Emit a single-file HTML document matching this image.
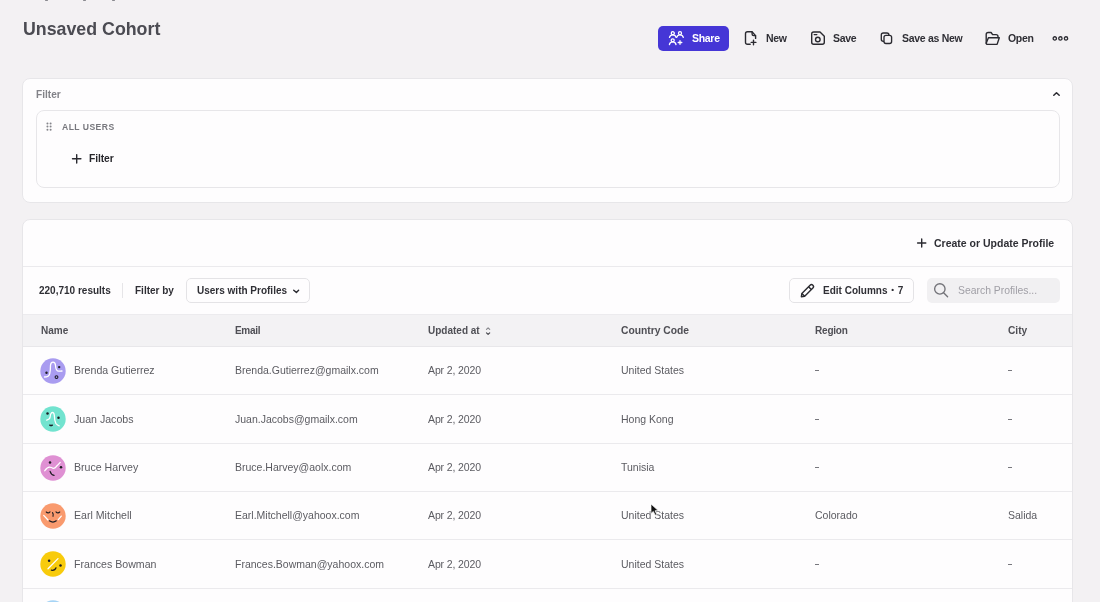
<!DOCTYPE html>
<html><head><meta charset="utf-8">
<style>
*{box-sizing:border-box;margin:0;padding:0}
html,body{width:1100px;height:602px;overflow:hidden}
body{background:#f3f1f3;font-family:"Liberation Sans",sans-serif;position:relative;color:#2b2b30}
.a{position:absolute;white-space:nowrap;will-change:transform}
svg.a{overflow:visible}
.card{background:#fefdfe;border:1px solid #e7e6e9;border-radius:8px}
</style></head><body>
<div class="a" style="left:44.5px;top:0;width:2.5px;height:1.2px;background:#8a8a90;border-radius:1px"></div>
<div class="a" style="left:82.5px;top:0;width:2.5px;height:1.2px;background:#8a8a90;border-radius:1px"></div>
<div class="a" style="left:111.5px;top:0;width:2.5px;height:1.2px;background:#8a8a90;border-radius:1px"></div>
<div class="a" style="left:23px;top:21.73px;font-size:17.8px;line-height:14px;font-weight:bold;color:#4b4b52;">Unsaved Cohort</div>
<div class="a" style="left:658px;top:26px;width:71px;height:25px;background:#4536d6;border-radius:5px"></div>
<svg class="a" style="left:668px;top:30px" width="17" height="16" viewBox="0 0 17 16"><g fill="none" stroke="#fff" stroke-width="1.3" stroke-linecap="round">
<circle cx="4.8" cy="3.2" r="1.5"/><path d="M1.5 7.4 A3.4 3.4 0 0 1 8.1 7.4"/>
<circle cx="12" cy="3.2" r="1.5"/><path d="M8.7 7.4 A3.4 3.4 0 0 1 15.3 7.4"/>
<circle cx="4.7" cy="10.3" r="1.5"/><path d="M1.4 14.5 A3.4 3.4 0 0 1 8 14.5"/>
<path d="M12 10.7 V14.3 M10.2 12.5 H13.8"/></g></svg>
<div class="a" style="left:692px;top:31.26px;font-size:10.5px;line-height:14px;font-weight:bold;color:#ffffff;letter-spacing:-0.3px;">Share</div>
<svg class="a" style="left:744px;top:30px" width="14" height="16" viewBox="0 0 14 16"><g fill="none" stroke="#2a2a30" stroke-width="1.4" stroke-linecap="round" stroke-linejoin="round">
<path d="M6.2 14.3 H3.5 Q1.5 14.3 1.5 12.3 V3.7 Q1.5 1.7 3.5 1.7 H8 L11.6 5.6 V8.4"/>
<path d="M8.1 1.9 V4 Q8.1 5.6 9.7 5.6 H11.5"/>
<path d="M7.2 12.4 H11.9 M9.5 10.1 V14.7"/></g></svg>
<div class="a" style="left:766px;top:31.26px;font-size:10.5px;line-height:14px;font-weight:bold;color:#2f2f35;letter-spacing:-0.3px;">New</div>
<svg class="a" style="left:810px;top:30px" width="16" height="16" viewBox="0 0 16 16"><g fill="none" stroke="#2a2a30" stroke-width="1.4" stroke-linecap="round" stroke-linejoin="round">
<path d="M1.7 4 Q1.7 2 3.7 2 H10 L14.3 6.3 V12.3 Q14.3 14.3 12.3 14.3 H3.7 Q1.7 14.3 1.7 12.3 Z"/>
<path d="M4.2 4.6 H6.8"/><circle cx="7.8" cy="9.5" r="2.3"/></g></svg>
<div class="a" style="left:833px;top:31.26px;font-size:10.5px;line-height:14px;font-weight:bold;color:#2f2f35;letter-spacing:-0.3px;">Save</div>
<svg class="a" style="left:878px;top:30px" width="16" height="16" viewBox="0 0 16 16"><g fill="none" stroke="#2a2a30" stroke-width="1.35" stroke-linejoin="round">
<rect x="3.3" y="3" width="7.6" height="8.3" rx="2"/>
<rect x="6" y="5.3" width="7.6" height="8.2" rx="2" fill="#f3f1f3"/></g></svg>
<div class="a" style="left:902px;top:31.26px;font-size:10.5px;line-height:14px;font-weight:bold;color:#2f2f35;letter-spacing:-0.3px;">Save as New</div>
<svg class="a" style="left:984px;top:30px" width="17" height="16" viewBox="0 0 17 16"><g fill="none" stroke="#2a2a30" stroke-width="1.4" stroke-linecap="round" stroke-linejoin="round">
<path d="M2.2 13.2 V4.5 Q2.2 2.5 4.2 2.5 H7.1 L8.6 4.6 H12 Q14 4.6 14 6.6 V7.6"/>
<path d="M4.4 7.8 H15.3 L13.1 14.4 H3.6 Q2 14.4 2.3 13 Z"/></g></svg>
<div class="a" style="left:1008px;top:31.26px;font-size:10.5px;line-height:14px;font-weight:bold;color:#2f2f35;letter-spacing:-0.3px;">Open</div>
<svg class="a" style="left:1050px;top:34px" width="20" height="9" viewBox="0 0 20 9"><g fill="none" stroke="#2a2a30" stroke-width="1.3">
<circle cx="4.8" cy="4.4" r="1.65"/><circle cx="10.4" cy="4.4" r="1.65"/><circle cx="16" cy="4.4" r="1.65"/></g></svg>
<div class="a" style="left:22px;top:78px;width:1051px;height:125px;background:#fefdfe;border:1px solid #e7e6e9;border-radius:8px"></div>
<div class="a" style="left:36px;top:88.10px;font-size:10.1px;line-height:14px;font-weight:bold;color:#828288;">Filter</div>
<svg class="a" style="left:1050px;top:88px" width="12" height="10" viewBox="0 0 12 10"><path d="M3.8 7.3 L6.5 4.7 L9.2 7.3" fill="none" stroke="#2a2a30" stroke-width="1.5" stroke-linecap="round" stroke-linejoin="round"/></svg>
<div class="a" style="left:36px;top:110px;width:1024px;height:78px;background:#fefdfe;border:1px solid #e7e6e9;border-radius:8px"></div>
<svg class="a" style="left:44px;top:120px" width="10" height="12" viewBox="0 0 10 12"><circle cx="3.45" cy="3.45" r="1" fill="#85858b"/><circle cx="3.45" cy="6.6" r="1" fill="#85858b"/><circle cx="3.45" cy="9.7" r="1" fill="#85858b"/><circle cx="6.6" cy="3.45" r="1" fill="#85858b"/><circle cx="6.6" cy="6.6" r="1" fill="#85858b"/><circle cx="6.6" cy="9.7" r="1" fill="#85858b"/></svg>
<div class="a" style="left:62px;top:119.82px;font-size:8.6px;line-height:14px;font-weight:bold;color:#77777d;letter-spacing:0.45px;">ALL USERS</div>
<svg class="a" style="left:70px;top:152px" width="13" height="13" viewBox="0 0 13 13"><path d="M6.7 2.6 V11 M2.5 6.8 H10.9" stroke="#2a2a30" stroke-width="1.4" stroke-linecap="round"/></svg>
<div class="a" style="left:89px;top:152.03px;font-size:10.3px;line-height:14px;font-weight:bold;color:#27272c;letter-spacing:-0.1px;">Filter</div>
<div class="a" style="left:22px;top:218.5px;width:1051px;height:420px;background:#fefdfe;border:1px solid #e7e6e9;border-radius:8px"></div>
<div class="a" style="left:23px;top:266px;width:1049px;height:1px;background:#ebeaed"></div>
<svg class="a" style="left:915px;top:237px" width="13" height="12" viewBox="0 0 13 12"><path d="M6.7 1.9 V10.1 M2.6 6 H10.8" stroke="#2a2a30" stroke-width="1.4" stroke-linecap="round"/></svg>
<div class="a" style="left:934px;top:235.96px;font-size:10.5px;line-height:14px;font-weight:bold;color:#2f2f35;">Create or Update Profile</div>
<div class="a" style="left:39px;top:283.54px;font-size:10px;line-height:14px;font-weight:bold;color:#2f2f35;">220,710 results</div>
<div class="a" style="left:122px;top:283px;width:1px;height:15px;background:#e6e5e8"></div>
<div class="a" style="left:135px;top:283.54px;font-size:10px;line-height:14px;font-weight:bold;color:#2f2f35;">Filter by</div>
<div class="a" style="left:186px;top:278px;width:124px;height:25.3px;border:1px solid #e4e3e6;border-radius:5px;background:#fefdfe"></div>
<div class="a" style="left:197px;top:283.54px;font-size:10px;line-height:14px;font-weight:bold;color:#2f2f35;">Users with Profiles</div>
<svg class="a" style="left:290px;top:284px" width="12" height="12" viewBox="0 0 12 12"><path d="M3.7 6.2 L6.4 8.4 L8.6 6.2" fill="none" stroke="#2a2a30" stroke-width="1.4" stroke-linecap="round" stroke-linejoin="round"/></svg>
<div class="a" style="left:789px;top:278px;width:125px;height:25.3px;border:1px solid #e4e3e6;border-radius:5px;background:#fefdfe"></div>
<svg class="a" style="left:799px;top:283px" width="17" height="17" viewBox="0 0 17 17"><g transform="translate(8.3 7.8) rotate(-45)" fill="none" stroke="#2a2a30" stroke-width="1.4" stroke-linejoin="round">
<path d="M-8.4 0 L-5.7 -2 H5.9 A2 2 0 0 1 5.9 2 H-5.7 Z"/><path d="M3.7 -2 V2 M-5.7 -2 V2"/></g></svg>
<div class="a" style="left:823px;top:283.54px;font-size:10px;line-height:14px;font-weight:bold;color:#2f2f35;">Edit Columns <span style="font-size:8px;line-height:0;vertical-align:1.8px;margin:0 1px">•</span> 7</div>
<div class="a" style="left:927px;top:278px;width:133px;height:25px;border-radius:5px;background:#f1f0f2"></div>
<svg class="a" style="left:930px;top:280px" width="20" height="20" viewBox="0 0 20 20"><g fill="none" stroke="#737379" stroke-width="1.35" stroke-linecap="round"><circle cx="9.85" cy="8.9" r="5.2"/><path d="M13.6 12.7 L17.6 16.7"/></g></svg>
<div class="a" style="left:958px;top:284.40px;font-size:10.4px;line-height:14px;font-weight:normal;color:#a09fa6;">Search Profiles...</div>
<div class="a" style="left:23px;top:314px;width:1049px;height:32.5px;background:#f3f2f4;border-top:1px solid #ecebee;border-bottom:1px solid #e8e7ea"></div>
<div class="a" style="left:40.5px;top:323.74px;font-size:10px;line-height:14px;font-weight:bold;color:#4f4f55;">Name</div>
<div class="a" style="left:234.5px;top:323.74px;font-size:10px;line-height:14px;font-weight:bold;color:#4f4f55;letter-spacing:-0.3px;">Email</div>
<div class="a" style="left:427.5px;top:323.74px;font-size:10px;line-height:14px;font-weight:bold;color:#4f4f55;">Updated at</div>
<svg class="a" style="left:482px;top:324px" width="12" height="14" viewBox="0 0 12 14"><g fill="none" stroke-width="1.2" stroke-linecap="round" stroke-linejoin="round"><path d="M4.5 5.4 L6.1 3.8 L7.7 5.4" stroke="#8a8a90"/><path d="M4.5 8.8 L6.1 10.4 L7.7 8.8" stroke="#4a4a50"/></g></svg>
<div class="a" style="left:621px;top:323.63px;font-size:10.3px;line-height:14px;font-weight:bold;color:#4f4f55;">Country Code</div>
<div class="a" style="left:814.5px;top:323.74px;font-size:10px;line-height:14px;font-weight:bold;color:#4f4f55;letter-spacing:-0.2px;">Region</div>
<div class="a" style="left:1007.5px;top:323.67px;font-size:10.2px;line-height:14px;font-weight:bold;color:#4f4f55;">City</div>
<div class="a" style="left:23px;top:394px;width:1049px;height:1px;background:#ebeaed"></div>
<svg class="a" style="left:40px;top:357.7px" width="26" height="26" viewBox="0 0 26 26"><circle cx="13" cy="13" r="12.7" fill="#a99cf0"/><g fill="#1c1c22" transform="translate(0.5 0.8)"><path d="M4 18.2 Q8.5 18 9.2 15 Q10 12 10 6.5 Q10.2 3.3 12.5 3.3 Q14.8 3.3 15 6.5 Q15.3 11.2 17 12 Q19 12.4 21.5 12.2" fill="none" stroke="#fff" stroke-width="1.3" stroke-linecap="round"/><circle cx="6" cy="14" r="1.2"/><circle cx="18.7" cy="8.3" r="1.2"/><circle cx="16" cy="18.3" r="1.4" fill="none" stroke="#1c1c22" stroke-width="1.1"/></g></svg>
<div class="a" style="left:74px;top:363.23px;font-size:10.6px;line-height:14px;font-weight:normal;color:#5b5b61;">Brenda Gutierrez</div>
<div class="a" style="left:234.5px;top:363.26px;font-size:10.5px;line-height:14px;font-weight:normal;color:#5b5b61;">Brenda.Gutierrez@gmailx.com</div>
<div class="a" style="left:427.5px;top:363.26px;font-size:10.5px;line-height:14px;font-weight:normal;color:#5b5b61;letter-spacing:-0.12px;">Apr 2, 2020</div>
<div class="a" style="left:621px;top:363.26px;font-size:10.5px;line-height:14px;font-weight:normal;color:#5b5b61;">United States</div>
<div class="a" style="left:814.6px;top:370.10px;width:4px;height:1.1px;background:#77777d"></div>
<div class="a" style="left:1008px;top:370.10px;width:4px;height:1.1px;background:#77777d"></div>
<div class="a" style="left:23px;top:443px;width:1049px;height:1px;background:#ebeaed"></div>
<svg class="a" style="left:40px;top:406.1px" width="26" height="26" viewBox="0 0 26 26"><circle cx="13" cy="13" r="12.7" fill="#72e3cf"/><g fill="#1c1c22" transform="translate(0.5 0.8)"><path d="M6.2 13.3 Q9.6 12.5 9.6 10.3 Q9.8 7 11.3 5.8 Q13.5 5.2 13.8 8.5 Q14 14 15.3 16.5 Q17 18.5 18.7 19" fill="none" stroke="#fff" stroke-width="1.3" stroke-linecap="round"/><circle cx="7" cy="6.6" r="1.25"/><circle cx="18" cy="11" r="1.25"/><path d="M8.8 18.3 Q10.5 20.2 12.3 18.3 Z" stroke="#1c1c22" stroke-width="0.9" stroke-linejoin="round"/></g></svg>
<div class="a" style="left:74px;top:411.63px;font-size:10.6px;line-height:14px;font-weight:normal;color:#5b5b61;">Juan Jacobs</div>
<div class="a" style="left:234.5px;top:411.66px;font-size:10.5px;line-height:14px;font-weight:normal;color:#5b5b61;">Juan.Jacobs@gmailx.com</div>
<div class="a" style="left:427.5px;top:411.66px;font-size:10.5px;line-height:14px;font-weight:normal;color:#5b5b61;letter-spacing:-0.12px;">Apr 2, 2020</div>
<div class="a" style="left:621px;top:411.66px;font-size:10.5px;line-height:14px;font-weight:normal;color:#5b5b61;">Hong Kong</div>
<div class="a" style="left:814.6px;top:418.50px;width:4px;height:1.1px;background:#77777d"></div>
<div class="a" style="left:1008px;top:418.50px;width:4px;height:1.1px;background:#77777d"></div>
<div class="a" style="left:23px;top:491px;width:1049px;height:1px;background:#ebeaed"></div>
<svg class="a" style="left:40px;top:454.5px" width="26" height="26" viewBox="0 0 26 26"><circle cx="13" cy="13" r="12.7" fill="#df90d3"/><g fill="#1c1c22" transform="translate(0.5 0.8)"><path d="M4.3 14.9 Q7 11.3 9 11.4 Q11 11.6 12.5 12.5 Q14.3 12.8 16 10.5 Q18 8.5 19.7 6.6" fill="none" stroke="#fff" stroke-width="1.3" stroke-linecap="round"/><circle cx="9.5" cy="6.8" r="1.25"/><circle cx="20.5" cy="11.4" r="1.25"/><path d="M9.6 15.6 Q10.5 19 13.6 19.6" fill="none" stroke="#1c1c22" stroke-width="1.2" stroke-linecap="round"/></g></svg>
<div class="a" style="left:74px;top:460.03px;font-size:10.6px;line-height:14px;font-weight:normal;color:#5b5b61;">Bruce Harvey</div>
<div class="a" style="left:234.5px;top:460.06px;font-size:10.5px;line-height:14px;font-weight:normal;color:#5b5b61;">Bruce.Harvey@aolx.com</div>
<div class="a" style="left:427.5px;top:460.06px;font-size:10.5px;line-height:14px;font-weight:normal;color:#5b5b61;letter-spacing:-0.12px;">Apr 2, 2020</div>
<div class="a" style="left:621px;top:460.06px;font-size:10.5px;line-height:14px;font-weight:normal;color:#5b5b61;">Tunisia</div>
<div class="a" style="left:814.6px;top:466.90px;width:4px;height:1.1px;background:#77777d"></div>
<div class="a" style="left:1008px;top:466.90px;width:4px;height:1.1px;background:#77777d"></div>
<div class="a" style="left:23px;top:539px;width:1049px;height:1px;background:#ebeaed"></div>
<svg class="a" style="left:40px;top:502.9px" width="26" height="26" viewBox="0 0 26 26"><circle cx="13" cy="13" r="12.7" fill="#f99a6e"/><g fill="#1c1c22" transform="translate(0.5 0.8)"><path d="M3.2 11.6 L7.5 16.2 M20.8 12.3 L17.8 15.8" fill="none" stroke="#fff" stroke-width="1.3" stroke-linecap="round"/><path d="M5.8 8.2 Q7.5 10 9.5 8 M15.5 8 Q17.5 10 19.2 8.2 M12 8.8 Q13.3 10.5 12.5 12.5" fill="none" stroke="#1c1c22" stroke-width="1.15" stroke-linecap="round"/><path d="M8.8 17 Q12.5 19.5 15.8 17" fill="none" stroke="#1c1c22" stroke-width="1.2" stroke-linecap="round"/></g></svg>
<div class="a" style="left:74px;top:508.43px;font-size:10.6px;line-height:14px;font-weight:normal;color:#5b5b61;">Earl Mitchell</div>
<div class="a" style="left:234.5px;top:508.46px;font-size:10.5px;line-height:14px;font-weight:normal;color:#5b5b61;">Earl.Mitchell@yahoox.com</div>
<div class="a" style="left:427.5px;top:508.46px;font-size:10.5px;line-height:14px;font-weight:normal;color:#5b5b61;letter-spacing:-0.12px;">Apr 2, 2020</div>
<div class="a" style="left:621px;top:508.46px;font-size:10.5px;line-height:14px;font-weight:normal;color:#5b5b61;">United States</div>
<div class="a" style="left:814.5px;top:508.46px;font-size:10.5px;line-height:14px;font-weight:normal;color:#5b5b61;">Colorado</div>
<div class="a" style="left:1008px;top:508.46px;font-size:10.5px;line-height:14px;font-weight:normal;color:#5b5b61;">Salida</div>
<div class="a" style="left:23px;top:588px;width:1049px;height:1px;background:#ebeaed"></div>
<svg class="a" style="left:40px;top:551.3px" width="26" height="26" viewBox="0 0 26 26"><circle cx="13" cy="13" r="12.7" fill="#f8cb0c"/><g fill="#1c1c22" transform="translate(0.5 0.8)"><path d="M7.5 17 L17.5 6.8" fill="none" stroke="#fff" stroke-width="1.3" stroke-linecap="round"/><circle cx="8.6" cy="9" r="1.25"/><circle cx="20" cy="13.6" r="1.25"/><path d="M10.8 18.4 Q14.5 19 15.5 16" fill="none" stroke="#1c1c22" stroke-width="1.2" stroke-linecap="round"/></g></svg>
<div class="a" style="left:74px;top:556.83px;font-size:10.6px;line-height:14px;font-weight:normal;color:#5b5b61;">Frances Bowman</div>
<div class="a" style="left:234.5px;top:556.86px;font-size:10.5px;line-height:14px;font-weight:normal;color:#5b5b61;">Frances.Bowman@yahoox.com</div>
<div class="a" style="left:427.5px;top:556.86px;font-size:10.5px;line-height:14px;font-weight:normal;color:#5b5b61;letter-spacing:-0.12px;">Apr 2, 2020</div>
<div class="a" style="left:621px;top:556.86px;font-size:10.5px;line-height:14px;font-weight:normal;color:#5b5b61;">United States</div>
<div class="a" style="left:814.6px;top:563.70px;width:4px;height:1.1px;background:#77777d"></div>
<div class="a" style="left:1008px;top:563.70px;width:4px;height:1.1px;background:#77777d"></div>
<svg class="a" style="left:40px;top:599.7px" width="26" height="26" viewBox="0 0 26 26"><circle cx="13" cy="13" r="12.7" fill="#a6d4f5"/></svg>
<svg class="a" style="left:649px;top:502px" width="12" height="16" viewBox="0 0 12 16"><path d="M2 2 L2 11.5 L4.3 9.4 L6.2 13.2 L7.8 12.5 L6 8.8 L9.2 8.6 Z" fill="#111" stroke="#fff" stroke-width="0.7" stroke-linejoin="round"/></svg>
</body></html>
